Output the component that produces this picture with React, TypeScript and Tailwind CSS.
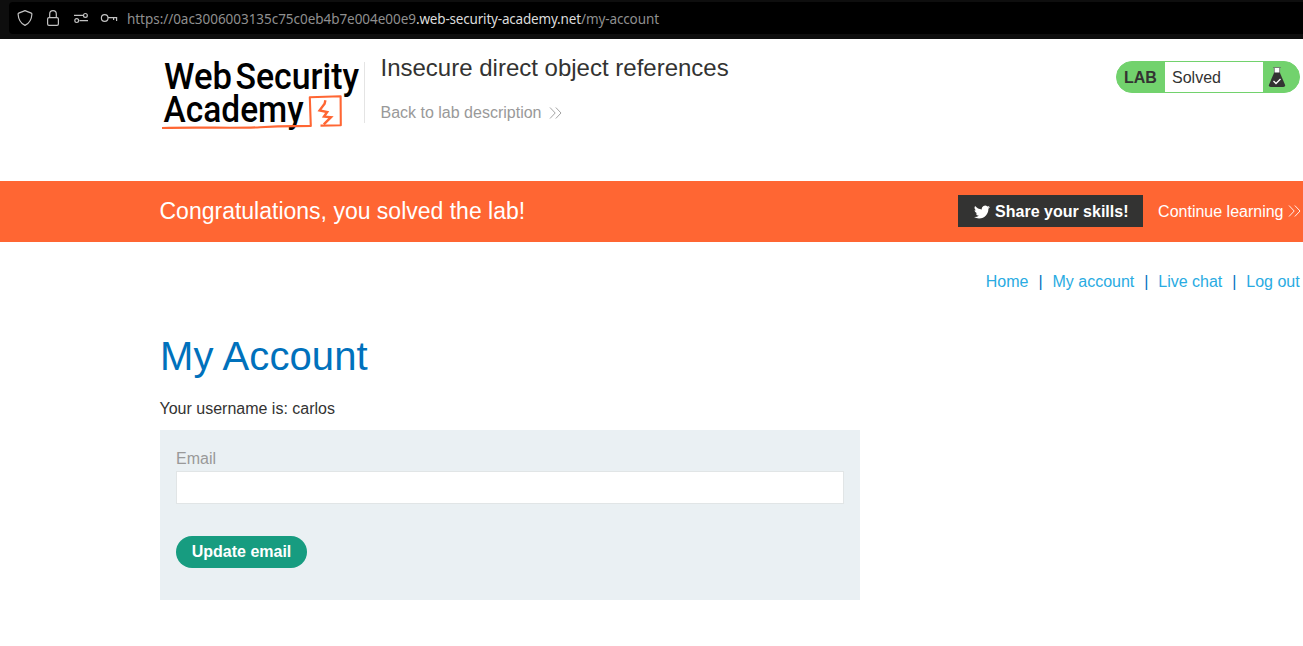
import React from "react";

function Chevrons({ className }: { className: string }) {
  return (
    <svg className={className} width="13" height="12" viewBox="0 0 13 12" fill="none" stroke="currentColor" strokeWidth="0.9">
      <path d="M1 0.5 6.2 6 1 11.5M6.8 0.5 12 6 6.8 11.5" />
    </svg>
  );
}

function AddressBar() {
  return (
    <div className="h-[39px] bg-[#0e0e0e] pt-[2px] pl-[9px]">
      <div className="flex h-8 items-center rounded-l-[4px] bg-black">
        <svg className="shrink-0" width="118" height="32" viewBox="9 2 118 32" fill="none" stroke="#c2c2c2" strokeWidth="1.2">
          <path d="M25 10.6 31.3 13.1Q32 13.4 31.9 14.2C31.6 19.5 29.4 23.2 25 25.4C20.6 23.2 18.4 19.5 18.1 14.2Q18 13.4 18.7 13.1Z" strokeLinejoin="round" />
          <rect x="47.6" y="17.6" width="10.8" height="7.8" rx="1.4" />
          <path d="M49.7 17.5V14a3.3 3.3 0 0 1 6.6 0v3.5" />
          <path d="M74 15.4h9M79.5 20.6h8.5" />
          <circle cx="85.4" cy="15.4" r="1.9" />
          <circle cx="76.7" cy="20.6" r="1.9" />
          <circle cx="104.7" cy="18" r="3.3" />
          <path d="M108 17.6h8.6v3.5M113.6 17.6v2.5" />
        </svg>
        <svg width="534" height="32" viewBox="0 0 534 32" className="font-['Noto_Sans',sans-serif] text-[13.5px]">
          <text x="0" y="22" fill="#8f8f8f" textLength="289">https://0ac3006003135c75c0eb4b7e004e00e9</text>
          <text x="289" y="22" fill="#dcdcdc" textLength="165">.web-security-academy.net</text>
          <text x="454" y="22" fill="#8f8f8f" textLength="78">/my-account</text>
        </svg>
      </div>
    </div>
  );
}

function Logo() {
  return (
    <svg className="shrink-0 overflow-visible" width="204" height="76" viewBox="160 57 204 76">
      <g fontFamily="Roboto, sans-serif" fontWeight="500" fontSize="37" fill="#000">
        <text x="164" y="89.2" textLength="68" lengthAdjust="spacingAndGlyphs">Web</text>
        <text x="235.5" y="89.2" textLength="123.5" lengthAdjust="spacingAndGlyphs">Security</text>
        <text x="163.6" y="122.2" textLength="140" lengthAdjust="spacingAndGlyphs">Academy</text>
      </g>
      <g fill="none" stroke="#ff6633">
        <path d="M162 128C200 126.8 235 128.6 260 127.2S290 126.3 310.8 126L309.8 97.3 340.6 96.3 340.8 125.2 320.5 125.6" strokeWidth="2.1" strokeLinejoin="round" />
        <path d="M325.4 100.3 324.6 103.8 319.6 110.4 327.2 112 324 116.6 331 117.2 323.8 124.4" strokeWidth="2.4" />
      </g>
    </svg>
  );
}

function LabStatus() {
  return (
    <div className="mt-1 flex h-8 w-[184px] rounded-full border border-[#72d26d] bg-[#72d26d] text-[16px] leading-[31px]">
      <b className="w-12 pl-[7px] text-[#333332]">LAB</b>
      <span className="w-[98px] bg-white pl-[7px] text-[#333332]">Solved</span>
      <svg className="mt-[4px] ml-[5px]" width="18" height="22" viewBox="0 0 18 22">
        <path d="M6 1.5h6v7H6Z" fill="#fff" />
        <path d="M5.2 1.5h7.6M6.4 2v5.5M11.6 2v5.5" stroke="#666" strokeWidth="0.8" />
        <path d="M6.2 6.5h5.6l5.2 12.2q.7 2.3-1.7 2.3H2.7Q.3 21 1 18.7Z" fill="#333332" />
        <path d="m5.5 15 2.5 2.5 4.5-4.5" fill="none" stroke="#fff" strokeWidth="1.3" />
      </svg>
    </div>
  );
}

const links = ["Home", "My account", "Live chat", "Log out"];

export default function App() {
  return (
    <div className="h-[646px] w-[1303px] overflow-hidden bg-white font-['Liberation_Sans',Arial,sans-serif] text-[16px] text-[#333332]">
      <AddressBar />
      <header className="flex h-[142px] items-start pt-[18px] pr-[3px] pl-[160px]">
        <Logo />
        <div className="mt-[5px] h-[61px] w-px bg-[#e4e4e4]" />
        <div className="ml-[15.5px] flex-1">
          <h2 className="-mt-[3px] text-[24px] leading-7">Insecure direct object references</h2>
          <a className="mt-[21px] flex items-center text-[#999] leading-5">
            Back to lab description
            <Chevrons className="-mt-px ml-2" />
          </a>
        </div>
        <LabStatus />
      </header>
      <section className="flex h-[61px] items-center bg-[#ff6633] pr-[2.5px] pl-[159.5px] text-white">
        <p className="flex-1 pb-[2px] text-[23px] leading-7">Congratulations, you solved the lab!</p>
        <button className="-mt-[1px] flex h-8 w-[185px] items-center bg-[#333332] pt-px pl-4 font-bold">
          <svg className="mr-[5px]" width="16" height="16" viewBox="0 0 24 24" fill="#fff">
            <path d="M23.95 4.57a10 10 0 0 1-2.82.77 4.96 4.96 0 0 0 2.16-2.72c-.95.55-2 .95-3.13 1.18a4.92 4.92 0 0 0-8.38 4.48C7.69 8.09 4.07 6.13 1.64 3.16a4.92 4.92 0 0 0 1.52 6.57 4.9 4.9 0 0 1-2.23-.61v.06c0 2.39 1.7 4.38 3.95 4.83a5 5 0 0 1-2.21.08 4.94 4.94 0 0 0 4.6 3.42A9.87 9.87 0 0 1 0 19.54a14 14 0 0 0 7.55 2.21c9.05 0 14-7.5 14-13.98 0-.21 0-.42-.02-.63a9.94 9.94 0 0 0 2.46-2.55z" />
          </svg>
          <span className="pt-px">Share your skills!</span>
        </button>
        <a className="ml-[15px] flex items-center leading-5">
          Continue learning
          <Chevrons className="-mt-px ml-1" />
        </a>
      </section>
      <nav className="flex h-[79px] items-center justify-end pr-[3.3px] text-[#29abe2]">
        {links.map((link, i) => (
          <React.Fragment key={link}>
            {i > 0 && <span className="w-6 text-center text-[#0070c0]">|</span>}
            <a>{link}</a>
          </React.Fragment>
        ))}
      </nav>
      <main className="ml-[160px] w-[700px]">
        <h1 className="mt-[11px] text-[40px] leading-[48px] tracking-[0.1px] text-[#0071bc]">My Account</h1>
        <p className="-ml-[0.5px] mt-[19px] leading-5">Your username is: carlos</p>
        <form className="mt-[11px] h-[170px] bg-[#eaf0f3] px-4 pt-[19px]">
          <label className="block leading-5 text-[#999]">Email</label>
          <input aria-label="Email" className="mt-[2px] block h-[33px] w-full border border-[#e1e5e6] bg-white px-2 outline-none" />
          <button type="button" className="mt-8 h-8 w-[131px] rounded-full bg-[#179c80] font-bold text-white">Update email</button>
        </form>
      </main>
    </div>
  );
}
